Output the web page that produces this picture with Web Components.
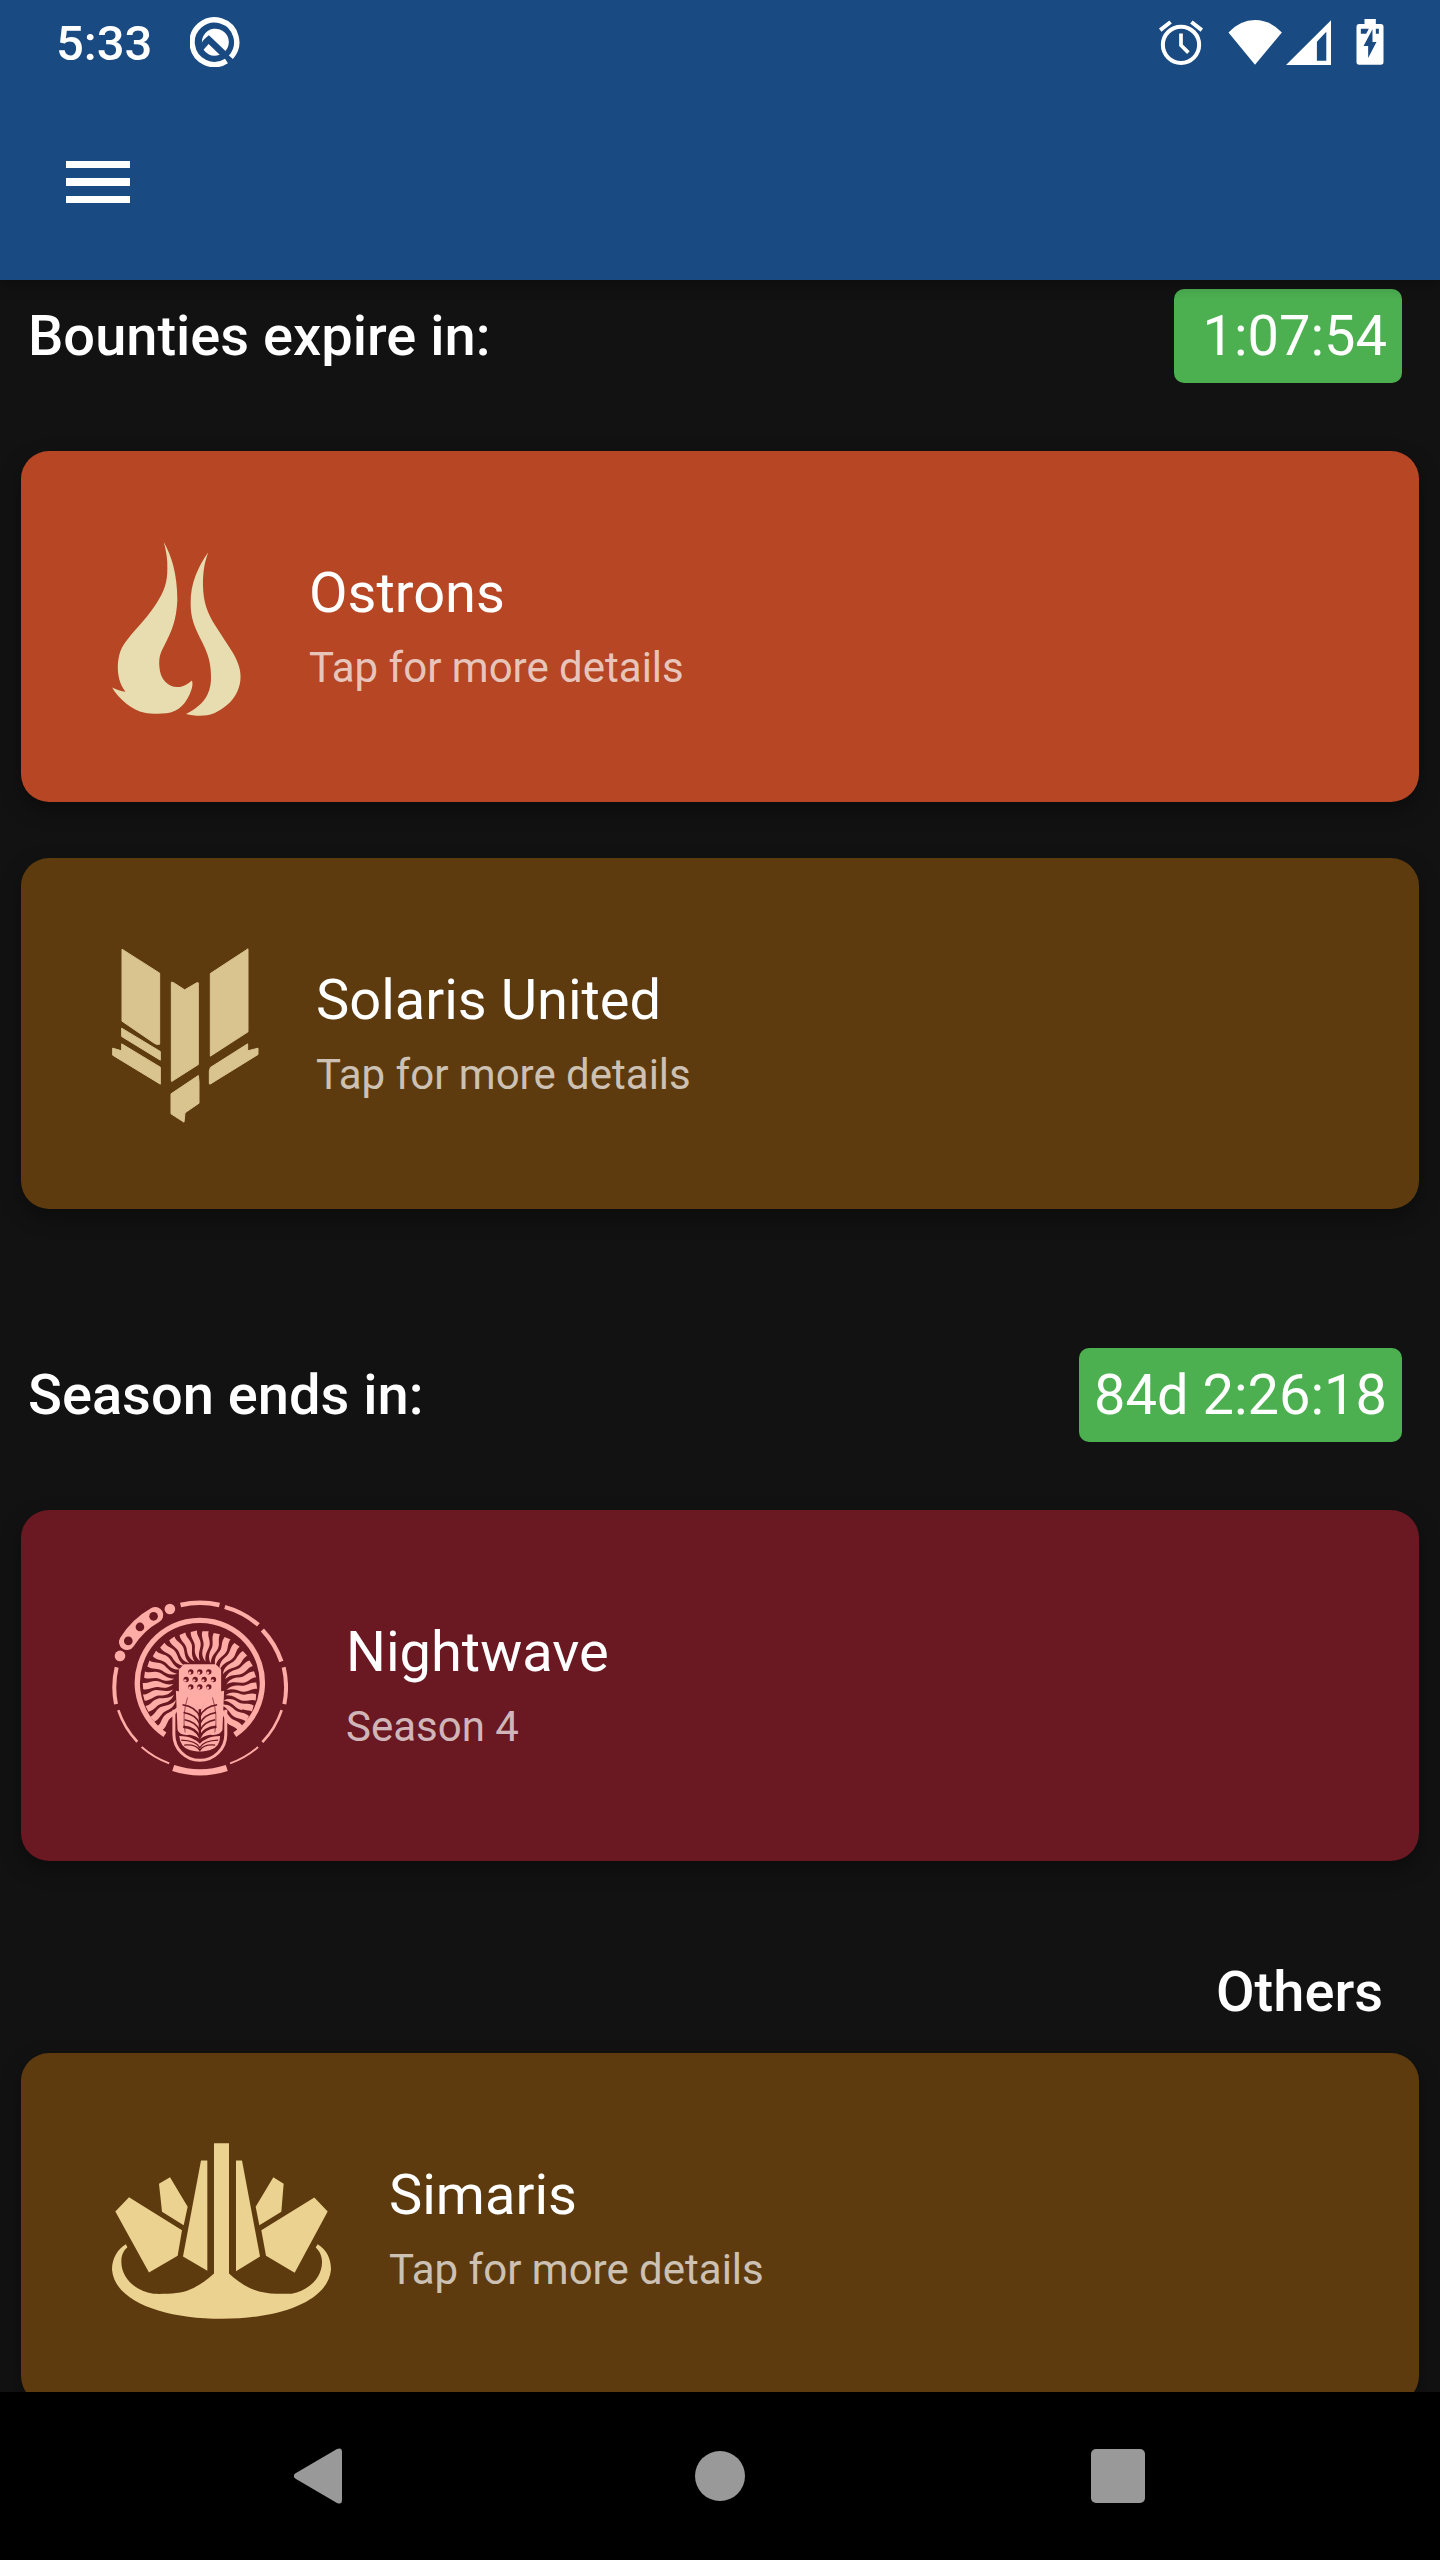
<!DOCTYPE html>
<html lang="en">
<head>
<meta charset="utf-8">
<title>Syndicates</title>
<style>
html, body { height: 100%; margin: 0; background: #121212; }
body { font-family: Roboto, "Open Sans", sans-serif; color: #fff; }
</style>
</head>
<body>
<syndicate-app></syndicate-app>

<template id="icon-ostrons">
<svg viewBox="67 65 417 523" width="139" height="174" fill="#e8ddb0" aria-hidden="true">
<path d="M222 65C245 105 263 160 263 240C260 300 248 330 222 380C208 405 208 420 209 440C211 480 238 502 264 501C283 500 294 491 307 481C310 490 308 500 305 510C292 550 265 577 230 580C205 582 180 581 165 578C125 570 86 535 67 502C80 508 95 514 107 515C88 490 84 465 84 437C86 400 95 380 113 358C145 318 175 290 200 250C225 212 233 185 233 145C234 115 229 90 222 65Z"/>
<path d="M356 96C343 130 340 160 340 195C341 250 355 280 375 313L428 395C444 422 453 445 453 470C453 500 440 530 415 553C395 570 372 584 352 586C335 588 310 588 289 582C320 566 340 550 353 525C363 505 365 485 364 465C364 420 350 390 332 355C315 320 303 295 303 250C302 190 325 140 356 96Z"/>
</svg>
</template>

<template id="icon-solaris">
<svg viewBox="66 55 438 524" width="146" height="175" fill="#d9c490" stroke="#d9c490" stroke-width="3" stroke-linejoin="round" overflow="visible" aria-hidden="true">
<path d="M96 58L209 130V343Q200 345 194 341L96 274Z"/>
<path d="M474 57V306L361 379V131Z"/>
<path d="M244 157L250 158L284 180L320 159L325 159V404L245 455L244 453Z"/>
<path d="M95 295L211 365V391L95 320Z"/>
<path d="M68 355L95 363V342L211 412V463L68 376Z"/>
<path d="M473 342V363L504 355V374L360 463L358 462V424L361 413Z"/>
<path d="M325 437L327 455V520L285 549L282 577L243 552V492Z"/>
</svg>
</template>

<template id="icon-nightwave">
<svg viewBox="52 42 529 529" width="176" height="176" fill="#ffaba6" aria-hidden="true">
<g id="ring" fill="none" stroke="#ffaba6">
<path stroke-width="14" d="M258 57A257 257 0 0 1 375 57"/>
<path stroke-width="13" d="M391 63A257 257 0 0 1 492 117"/>
<path stroke-width="13" d="M504 132A257 257 0 0 1 561 227"/>
<path stroke-width="12" d="M568 244A257 257 0 0 1 570 355"/>
<path stroke-width="8" d="M562 373A254 254 0 0 1 504 469"/>
<path stroke-width="6" d="M491 484A254 254 0 0 1 407 533"/>
<path stroke-width="6" d="M141 484A254 254 0 0 0 224 533"/>
<path stroke-width="8" d="M71 373A254 254 0 0 0 128 468"/>
<path stroke-width="12" d="M66 244A257 257 0 0 0 64 355"/>
<path stroke-width="19" d="M236 547A262 262 0 0 0 397 547"/>
<path stroke-width="16" d="M211 447A188 188 0 1 1 421 447"/>
</g>
<circle cx="76" cy="210" r="16"/><circle cx="226" cy="69" r="16"/>
<path fill="none" stroke="#ffaba6" stroke-width="48" stroke-linecap="round" d="M97 168Q130 116 182 87"/>
<g fill="#6a1821"><circle cx="101" cy="165" r="13"/><circle cx="136" cy="123" r="13"/><circle cx="177" cy="91" r="13"/></g>
<g id="rays"></g>
<path d="M268 235H364L380 251V319Q340 325 316 380Q290 325 253 319V251Z"/>
<g fill="#6a1821">
<circle cx="289" cy="258" r="8"/><circle cx="316" cy="258" r="8"/><circle cx="343" cy="258" r="8"/>
<circle cx="275" cy="281" r="8"/><circle cx="302" cy="281" r="8"/><circle cx="329" cy="281" r="8"/><circle cx="357" cy="281" r="8"/>
<circle cx="289" cy="303" r="8"/><circle cx="316" cy="303" r="8"/><circle cx="343" cy="303" r="8"/>
</g>
<g>
<circle cx="286" cy="261" r="4"/><circle cx="313" cy="261" r="4"/><circle cx="340" cy="261" r="4"/>
<circle cx="272" cy="284" r="4"/><circle cx="299" cy="284" r="4"/><circle cx="326" cy="284" r="4"/><circle cx="354" cy="284" r="4"/>
<circle cx="286" cy="306" r="4"/><circle cx="313" cy="306" r="4"/><circle cx="340" cy="306" r="4"/>
</g>
<path d="M244 315Q295 320 316 382Q337 320 389 315L384 433Q375 451 347 447Q326 451 316 461Q306 451 285 447Q257 451 249 433Z"/>
<path d="M254 451Q282 452 293 458Q308 464 316 474Q324 464 339 458Q350 452 377 451Q377 485 347 493Q328 499 316 497Q304 499 285 493Q257 485 254 451Z"/>
<g fill="none" stroke="#6a1821">
<path stroke-width="7" d="M316 370V452"/>
<path stroke-width="5" d="M264 357Q304 363 316 393Q328 363 368 357M267 380Q304 386 316 414Q328 386 365 380M270 402Q304 408 316 435Q328 408 362 402"/>
<path stroke-width="7" d="M266 423Q304 426 316 455Q328 426 366 423"/>
<path stroke-width="2" d="M279 335Q262 390 272 440M354 335Q371 390 361 440"/>
<path stroke-width="4" d="M260 463Q305 464 316 486Q327 464 371 463M269 478Q305 475 316 494Q327 475 362 478"/>
</g>
<path fill="none" stroke="#ffaba6" stroke-width="9" d="M238 372V446A78 78 0 0 0 394 446V372"/>
</svg>
</template>

<template id="icon-simaris">
<svg viewBox="51 69 657 527" width="219" height="176" fill="#ebd290" aria-hidden="true">
<path d="M357 69H402V460C440 495 480 520 545 521H590C650 508 682 465 681 425C681 407 673 391 662 382L668 372C695 388 708 415 708 448C700 545 550 596 380 596C210 596 58 545 51 448C51 415 67 387 93 372L97 382C84 392 79 407 79 425C79 465 110 510 175 521C215 522 260 520 285 508C310 498 337 479 357 460Z"/>
<path d="M318 121H337V452L264 409ZM423 121H441L495 409L423 453Z"/>
<path d="M192 191L225 171L278 260L266 315L201 275ZM566 191L535 171L482 260L493 315L559 275Z"/>
<path d="M102 231L261 330L248 407L162 457L61 274ZM658 232L499 330L513 407L599 458L698 274Z"/>
</svg>
</template>

<script>
class StatusBar extends HTMLElement {
  constructor() {
    super();
    this.attachShadow({ mode: "open" }).innerHTML = `
<style>
:host { display: flex; justify-content: space-between; align-items: center; height: 84px; padding: 0 56px; box-sizing: border-box; }
.group { display: flex; align-items: center; gap: 25px; }
.left { gap: 38px; }
time { padding-top: 3px; font-size: 49px; line-height: 56px; font-weight: 500; }
svg { display: block; fill: #fff; }
.radio { display: flex; gap: 4px; }
</style>
<div class="group left"><time>5:33</time>
<svg width="50" height="50" viewBox="569 52 148 148"><path fill="none" stroke="#fff" stroke-width="16" d="M677 182A66 66 0 1 1 690 171"/><path d="M604 128A40 40 0 1 1 674 153L625 106Q608 119 604 128ZM624 132L657 164Q628 174 609 149Z"/></svg></div>
<div class="group">
<svg width="44" height="45" viewBox="184 58 130 134"><circle cx="249" cy="132" r="54" fill="none" stroke="#fff" stroke-width="12"/><path fill="none" stroke="#fff" stroke-width="12" d="M187 88L218 64M311 88L280 64"/><path fill="none" stroke="#fff" stroke-width="11" d="M249 98V133L271 155"/></svg>
<div class="radio">
<svg width="54" height="45" viewBox="389 57 160 134"><path d="M390 94Q425 57 469 57Q514 57 549 94L469 190Z"/></svg>
<svg width="45" height="45" viewBox="562 57 134 134"><path fill-rule="evenodd" d="M562 191L696 58V191ZM654 122V178H682V92Z"/></svg>
</div>
<svg width="28" height="46" viewBox="770 57 83 138"><path fill-rule="evenodd" d="M795 57H829V72H844Q852 72 852 80V186Q852 194 844 194H779Q771 194 771 186V80Q771 72 779 72H795ZM784 86V101H800L808 86ZM829 86V101H838V86ZM819 88L792 138H806V174L831 126H819Z"/></svg>
</div>`;
  }
}

class AppHeader extends HTMLElement {
  constructor() {
    super();
    this.attachShadow({ mode: "open" }).innerHTML = `
<style>
:host { display: flex; align-items: center; height: 196px; padding: 0 56px; box-sizing: border-box; }
button { display: flex; padding: 10px; border: 0; background: none; cursor: pointer; }
svg { display: block; }
</style>
<button aria-label="Open menu"><svg width="64" height="42" viewBox="0 0 64 42" fill="#fff"><path d="M0 0H64V7H0ZM0 17H64V25H0ZM0 35H64V42H0Z"/></svg></button>`;
  }
}

class SectionHeading extends HTMLElement {
  constructor() {
    super();
    this.attachShadow({ mode: "open" }).innerHTML = `
<style>
:host { display: flex; justify-content: space-between; align-items: center; padding: 0 38px 0 28px; min-height: 94px; }
h2 { margin: 0; font-size: 56px; line-height: 66px; font-weight: 500; }
</style>
<h2><slot></slot></h2><slot name="timer"></slot>`;
  }
}

class CountdownBadge extends HTMLElement {
  constructor() {
    super();
    this.attachShadow({ mode: "open" }).innerHTML = `
<style>
:host { display: block; padding: 14px 15px; border-radius: 10px; background: #4caf50; }
time { display: block; font-size: 56px; line-height: 66px; white-space: pre; }
</style>
<time><slot></slot></time>`;
  }
}

class SyndicateCard extends HTMLElement {
  constructor() {
    super();
    this.attachShadow({ mode: "open" }).innerHTML = `
<style>
:host { display: block; }
button { display: flex; align-items: center; gap: 58px; width: 100%; height: 351px; padding: 0 91px; border: 0; border-radius: 28px; background: var(--card-color); color: #fff; font: inherit; text-align: left; cursor: pointer; box-shadow: 0 8px 20px rgba(0, 0, 0, .35); }
.icon { flex: none; padding-top: 4px; }
svg { display: block; }
.text { display: flex; flex-direction: column; gap: 16px; }
.title { font-size: 56px; line-height: 66px; }
.sub { font-size: 42px; line-height: 52px; color: rgba(255, 255, 255, .7); }
</style>
<button><span class="icon"></span><span class="text"><span class="title"><slot></slot></span><span class="sub"><slot name="sub"></slot></span></span></button>`;
  }
  connectedCallback() {
    const art = document.getElementById("icon-" + this.getAttribute("icon")).content.cloneNode(true);
    const rays = art.querySelector("#rays");
    if (rays) {
      const count = 24;
      for (let i = 0; i < count; i++) {
        const ray = document.createElementNS("http://www.w3.org/2000/svg", "path");
        ray.setAttribute("d", "M306 136L325 134C322 150 334 160 332 176C330 191 319 203 325 226C309 210 312 194 314 181C316 165 303 155 306 136Z");
        ray.setAttribute("transform", `rotate(${-135 + i * 270 / (count - 1)} 316 306)`);
        rays.append(ray);
      }
    }
    this.shadowRoot.querySelector(".icon").replaceChildren(art);
  }
}

class NavigationBar extends HTMLElement {
  constructor() {
    super();
    this.attachShadow({ mode: "open" }).innerHTML = `
<style>
:host { display: flex; justify-content: center; align-items: center; gap: 318px; height: 168px; background: #000; }
button { display: flex; justify-content: center; align-items: center; width: 80px; height: 80px; padding: 0; border: 0; background: none; cursor: pointer; }
svg { display: block; fill: #999; }
</style>
<button aria-label="Back"><svg width="56" height="56" viewBox="0 0 56 56"><path d="M2 25L43 1Q48 -1 48 4V52Q48 57 43 55L2 31Q-3 28 2 25Z"/></svg></button>
<button aria-label="Home"><svg width="50" height="50" viewBox="0 0 50 50"><circle cx="25" cy="25" r="25"/></svg></button>
<button aria-label="Recent apps"><svg width="54" height="54" viewBox="0 0 54 54"><rect width="54" height="54" rx="5"/></svg></button>`;
  }
}

class SyndicateApp extends HTMLElement {
  constructor() {
    super();
    this.attachShadow({ mode: "open" }).innerHTML = `
<style>
:host { display: flex; flex-direction: column; height: 100vh; background: #121212; }
header { flex: none; background: #194a82; box-shadow: 0 4px 14px rgba(0, 0, 0, .3); position: relative; }
main { flex: 1; min-height: 0; overflow: hidden; padding-top: 9px; }
section { margin-bottom: 139px; }
.season { margin-bottom: 84px; }
.cards { display: flex; flex-direction: column; gap: 56px; padding: 0 21px; margin-top: 68px; }
.others { margin: 0; }
.others .cards { margin-top: 14px; }
.others section-heading { justify-content: flex-end; padding-right: 57px; }
navigation-bar { flex: none; }
</style>
<header><status-bar></status-bar><app-header></app-header></header>
<main>
<section>
<section-heading>Bounties expire in:<countdown-badge slot="timer"> 1:07:54</countdown-badge></section-heading>
<div class="cards">
<syndicate-card icon="ostrons" style="--card-color:#b64624">Ostrons<span slot="sub">Tap for more details</span></syndicate-card>
<syndicate-card icon="solaris" style="--card-color:#5d3b0e">Solaris United<span slot="sub">Tap for more details</span></syndicate-card>
</div>
</section>
<section class="season">
<section-heading>Season ends in:<countdown-badge slot="timer">84d 2:26:18</countdown-badge></section-heading>
<div class="cards">
<syndicate-card icon="nightwave" style="--card-color:#6a1821">Nightwave<span slot="sub">Season 4</span></syndicate-card>
</div>
</section>
<section class="others">
<section-heading>Others</section-heading>
<div class="cards">
<syndicate-card icon="simaris" style="--card-color:#5d3b0e">Simaris<span slot="sub">Tap for more details</span></syndicate-card>
</div>
</section>
</main>
<navigation-bar></navigation-bar>`;
  }
}

customElements.define("status-bar", StatusBar);
customElements.define("app-header", AppHeader);
customElements.define("section-heading", SectionHeading);
customElements.define("countdown-badge", CountdownBadge);
customElements.define("syndicate-card", SyndicateCard);
customElements.define("navigation-bar", NavigationBar);
customElements.define("syndicate-app", SyndicateApp);
</script>
</body>
</html>
